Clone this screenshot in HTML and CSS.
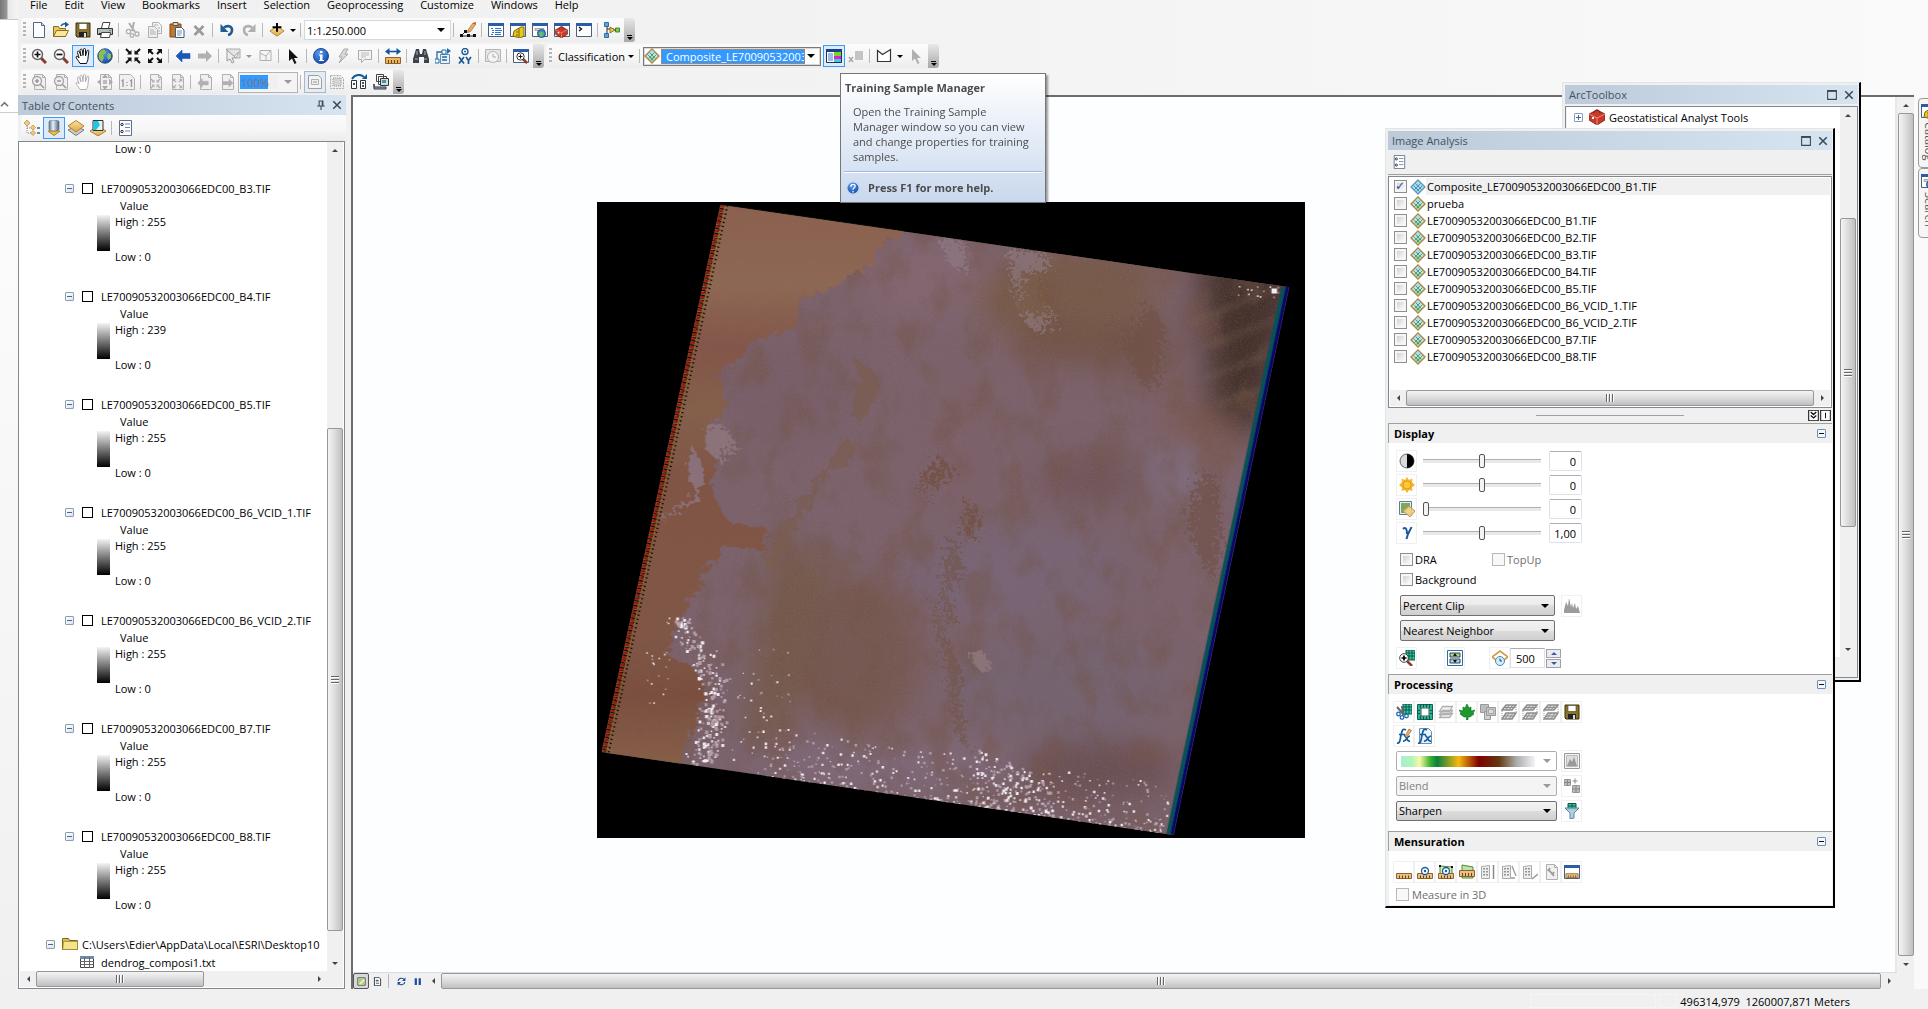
FILE: index.html
```html
<!DOCTYPE html>
<html lang="en">
<head>
<meta charset="utf-8">
<title>ArcMap</title>
<link rel="stylesheet" href="styles.css">
</head>
<body>
<svg class="sprite" aria-hidden="true">
  <defs>
    <linearGradient id="g-gold" x1="0" y1="0" x2="0" y2="1"><stop offset="0" stop-color="#fbe3a0"/><stop offset="1" stop-color="#dca545"/></linearGradient>
    <linearGradient id="g-cyl" x1="0" y1="0" x2="1" y2="0"><stop offset="0" stop-color="#5d718a"/><stop offset=".4" stop-color="#eaf1f8"/><stop offset="1" stop-color="#4f6178"/></linearGradient>
    <radialGradient id="g-blue" cx=".4" cy=".3" r=".8"><stop offset="0" stop-color="#5aa0f0"/><stop offset="1" stop-color="#0b3fa8"/></radialGradient>
  </defs>
  <symbol id="new" viewBox="0 0 16 16"><path d="M2.500 .5h8l3 3v12h-11z" fill="#fbfdff" stroke="#56677c"/><path d="M10.500 .5v3h3" fill="#c8d8e8" stroke="#56677c"/></symbol>
  <symbol id="open" viewBox="0 0 16 16"><path d="M.5 14.500v-10h5l1 2h6v8z" fill="#e8c860" stroke="#8a6d1e"/><path d="M.5 14.500l3-6h12l-3 6z" fill="#f8e69a" stroke="#8a6d1e"/><path d="M8 4c1-2 3-2.500 5-2" fill="none" stroke="#145a9a" stroke-width="1.500"/><path d="M12-.5l4 3-4 3z" fill="#145a9a"/></symbol>
  <symbol id="save" viewBox="0 0 16 16"><path d="M1 1h14v14H2l-1-1z" fill="#8a7328" stroke="#3a3010"/><path d="M4 1.500h8v6H4z" fill="#fff" stroke="#4a4020" stroke-width=".6"/><path d="M4 10h8v5H4z" fill="#222"/><path d="M9 11h2v4H9z" fill="#ddd"/></symbol>
  <symbol id="print" viewBox="0 0 16 16"><path d="M4.500 6L6 .5h7L11.500 6" fill="#fff" stroke="#444"/><path d="M.5 6.500h15v6H.5z" fill="#b8bcc0" stroke="#333"/><path d="M2 11h11v2H2z" fill="#222"/><path d="M4.500 10.500h9l-1 5h-9z" fill="#fff" stroke="#444"/><path d="M12 8h2v1h-2z" fill="#4a4"/></symbol>
  <symbol id="cut" viewBox="0 0 16 16"><path d="M4 1l6 9M9 0l-2 9" fill="none" stroke="currentColor" stroke-width="2"/><circle cx="3.500" cy="9.500" r="2.200" fill="none" stroke="currentColor" stroke-width="1.300"/><circle cx="12" cy="12" r="2" fill="none" stroke="currentColor" stroke-width="1.300"/><circle cx="7" cy="13.500" r="1.800" fill="none" stroke="currentColor" stroke-width="1.300"/></symbol>
  <symbol id="copy" viewBox="0 0 16 16"><path d="M5.500.5h6l3 3v8h-9z" fill="#f2f2f2" stroke="currentColor"/><path d="M1.500 4.500h6l3 3v8h-9z" fill="#eee" stroke="currentColor"/><path d="M3 8h4M3 10h6M3 12h6M7 3h4M11 6h2M11 9h2" stroke="currentColor"/></symbol>
  <symbol id="paste" viewBox="0 0 16 16"><path d="M1 2h11v13H1z" fill="#c07830" stroke="#7c4a14"/><path d="M4 .5h5v3H4z" fill="#e9d9a0" stroke="#555"/><path d="M6.500 5.500h6l2.500 2.500v7.500H6.500z" fill="#fff" stroke="#3a5a80"/><path d="M8 9h5M8 11h5M8 13h4" stroke="#6c90b8"/></symbol>
  <symbol id="del" viewBox="0 0 16 16"><path d="M3.500 4l9 9M12.500 4l-9 9" stroke="#9a9a9a" stroke-width="2.600"/></symbol>
  <symbol id="undo" viewBox="0 0 16 16"><path d="M5 5.500C8 3 13 4 13 8c0 3-2 4.500-4 5" fill="none" stroke="currentColor" stroke-width="2.600"/><path d="M1.500 2v8h8z" fill="currentColor"/></symbol>
  <symbol id="add" viewBox="0 0 18 16"><path d="M1 9l8-5 8 5-8 6z" fill="url(#g-gold)" stroke="#b08030"/><path d="M9 0v10M4 5h10" stroke="#000" stroke-width="2.200"/></symbol>
  <symbol id="sketch" viewBox="0 0 16 16"><path d="M2 13L6 9M1 14h14" fill="none" stroke="#222"/><path d="M0 12h3v3H0zM4 8h3v3H4zM7 12h3v3H7zM13 12h3v3h-3z" fill="#111"/><path d="M8 8l5-7 2.500 1.500-5 7-3 1z" fill="#f0b060" stroke="#8a5020" stroke-width=".6"/><path d="M13 1l2.500 1.500L16 0z" fill="#c33"/></symbol>
  <symbol id="win" viewBox="0 0 16 16"><path d="M.5 1.500h15v13H.5z" fill="#fff" stroke="#4b5f7a"/><path d="M0 1h16v3H0z" fill="#2c5ca8"/></symbol>
  <symbol id="toc" viewBox="0 0 16 16"><use href="#win"/><path d="M3 6.500h2M7 6.500h6M4 8.500h2M7 8.500h7M4 10.500h2M7 10.500h6M3 12.500h2M7 12.500h6" stroke="#2878d8"/></symbol>
  <symbol id="catalog" viewBox="0 0 16 16"><use href="#win"/><path d="M4 9l7-4h3v9l-4 2-7-2z" fill="#e8c81e" stroke="#7a6808"/><path d="M9 6v9M6 10h2M6 13h2" stroke="#7a6808"/></symbol>
  <symbol id="search" viewBox="0 0 16 16"><use href="#win"/><path d="M3 6.500h9v2H3z" fill="#ddd" stroke="#888" stroke-width=".7"/><circle cx="9.500" cy="11.500" r="4" fill="#3a8ad0" stroke="#1c5090"/><path d="M7 11c2-3 3 1 5-1l-1 4-3 1z" fill="#6cc060"/></symbol>
  <symbol id="toolbox" viewBox="0 0 16 16"><path d="M0 5l8-4 8 4v6l-8 5-8-5z" fill="#c83a28" stroke="#701810" stroke-width=".8"/><path d="M0 5l8 4 8-4M8 9v7" fill="none" stroke="#ef8a78"/><path d="M5 4c0-4 6-4 6 0" fill="none" stroke="#701810"/><path d="M3 8h2v2H3z" fill="#fff"/></symbol>
  <symbol id="tbwin" viewBox="0 0 16 16"><use href="#win"/><use href="#toolbox" x="1" y="4" width="13" height="12"/></symbol>
  <symbol id="py" viewBox="0 0 16 16"><use href="#win"/><path d="M3 5l2.500 2L3 9" fill="none" stroke="#111" stroke-width="1.300"/></symbol>
  <symbol id="model" viewBox="0 0 16 16"><path d="M3 3v10M3 7h7M10 8h3" stroke="#333"/><path d="M.5.5h4v4h-4zM.5 11.500h4v4h-4z" fill="#58a8e8" stroke="#14538c" stroke-width=".8"/><path d="M6 5l5 3-5 3z" fill="#f5c843" stroke="#7a5b10" stroke-width=".8"/><path d="M11.500 6h4v4h-4z" fill="#7ccf4e" stroke="#2d6a14" stroke-width=".8"/></symbol>
  <symbol id="zin" viewBox="0 0 16 16"><path d="M10 10l5 5" stroke="#8a3c2c" stroke-width="3"/><circle cx="6.500" cy="6.500" r="5" fill="#fff" stroke="#666" stroke-width="1.500"/><path d="M6.500 3.500v6M3.500 6.500h6" stroke="#111" stroke-width="1.700"/></symbol>
  <symbol id="zout" viewBox="0 0 16 16"><path d="M10 10l5 5" stroke="#8a3c2c" stroke-width="3"/><circle cx="6.500" cy="6.500" r="5" fill="#fff" stroke="#666" stroke-width="1.500"/><path d="M3.500 6.500h6" stroke="#111" stroke-width="1.700"/></symbol>
  <symbol id="pan" viewBox="0 0 16 16"><path d="M5 15.500C3 12 1 10 1 9s2-1 3 1L2.500 4.500C2 3 4 2.500 4.500 4L6 8 5 2.500C5 1 7 .5 7.200 2L8 7.500 8.500 1.500c0-1.500 2-1.500 2 0L10.500 8l1.500-5c.5-1.500 2-1 1.800.5L13 10c0 3-1 3.500-1.500 5.500z" fill="#fff" stroke="currentColor"/></symbol>
  <symbol id="globe" viewBox="0 0 16 16"><circle cx="8" cy="8" r="7.300" fill="url(#g-blue)" stroke="#24466e" stroke-width=".8"/><path d="M2 5c2-4 5-4 6-3l1 3-3 2 1 3-2 4C2 12 1 9 2 5zM11 5l3 1v4l-3 2-1-4z" fill="#8cc04c"/></symbol>
  <symbol id="fzin" viewBox="0 0 16 16"><path d="M1 1l4 4M15 1l-4 4M1 15l4-4M15 15l-4-4" stroke="currentColor" stroke-width="2"/><path d="M6.500 2v4.500H2zM9.500 2v4.500H14zM6.500 14V9.500H2zM9.500 14V9.500H14z" fill="currentColor"/></symbol>
  <symbol id="fzout" viewBox="0 0 16 16"><path d="M2 2l4 4M14 2l-4 4M2 14l4-4M14 14l-4-4" stroke="currentColor" stroke-width="2"/><path d="M1 1h5L1 6zM15 1h-5l5 5zM1 15h5l-5-5zM15 15h-5l5-5z" fill="currentColor"/></symbol>
  <symbol id="back" viewBox="0 0 16 16"><path d="M1 8l6-6v3.500h8v5H7V14z" fill="currentColor" stroke="currentColor" stroke-width=".6"/></symbol>
  <symbol id="fwd" viewBox="0 0 16 16"><path d="M15 8L9 2v3.500H1v5h8V14z" fill="currentColor"/></symbol>
  <symbol id="selfeat" viewBox="0 0 16 16"><path d="M1 1h14v9h-4l3-6-6 5z" fill="#e4e4e4" stroke="#aaa"/><path d="M2 2l0 11 3-2 2 4 2-1-2-4h4z" fill="#eee" stroke="#999"/></symbol>
  <symbol id="clearsel" viewBox="0 0 16 16"><path d="M3 2.500h11v10H3zM3 5l6 3 4-5M9 8v4" fill="#f4f4f4" stroke="#b0b0b0"/></symbol>
  <symbol id="pointer" viewBox="0 0 16 16"><path d="M4 1v12l3-2.500L9.500 16l2-1L9 10h4z" fill="currentColor"/></symbol>
  <symbol id="info" viewBox="0 0 16 16"><circle cx="8" cy="8" r="7.500" fill="url(#g-blue)" stroke="#1b4a94"/><path d="M7 3h2.500v2H7zM6 6.500h3.500V12H11v1H6v-1h1V7.500H6z" fill="#fff"/></symbol>
  <symbol id="flash" viewBox="0 0 16 16"><path d="M9 1h4l-3 5h3L4 15l3-6H4z" fill="#d8d8d8" stroke="#aaa"/></symbol>
  <symbol id="note" viewBox="0 0 16 16"><path d="M1.500 2.500h13v9h-7l-3 3v-3h-3z" fill="#f4f4f4" stroke="#aaa"/><path d="M4 5h8M4 7h8M4 9h5" stroke="#bbb"/></symbol>
  <symbol id="measure" viewBox="0 0 16 16"><path d="M3 3.500h10" stroke="#14559c" stroke-width="1.600"/><path d="M4.500 0v7L0 3.500zM11.500 0v7L16 3.500z" fill="#14559c"/><path d="M.5 9.500h15v6H.5z" fill="#e8b868" stroke="#94602a"/><path d="M3.500 12v3M6.500 12v3M9.500 12v3M12.500 12v3" stroke="#70420e"/></symbol>
  <symbol id="find" viewBox="0 0 16 16"><path d="M3 1h3l1 5h2l1-5h3l3 10v4h-5V9H6v6H0v-4z" fill="#3c4248"/><path d="M2 11h3M11 11h3M4 3v4M12 3v4" stroke="#aab4bd"/></symbol>
  <symbol id="route" viewBox="0 0 16 16"><path d="M5.500 6.500h9v9h-9z" fill="#e8f0f8" stroke="#6b87a4"/><path d="M2 13V4h9M7 9h5M7 12h5" fill="none" stroke="#1d6cae" stroke-width="1.300"/><path d="M0 11h4v4H0zM7 2h4v4H7z" fill="#fff" stroke="#1d6cae"/><path d="M12 0l4 3-4 3z" fill="#1d6cae"/></symbol>
  <symbol id="xy" viewBox="0 0 16 16"><circle cx="8" cy="3.500" r="3" fill="#fff" stroke="#1d5a94" stroke-width="1.400"/><circle cx="8" cy="3.500" r="1" fill="#1d5a94"/><path d="M2 9l5 6.500M7 9l-5 6.500M9 9l2.500 3.500L14 9M11.500 12v4" fill="none" stroke="#1d5a94" stroke-width="1.700"/></symbol>
  <symbol id="time" viewBox="0 0 16 16"><path d="M.5 1.500h15v12H.5z" fill="#e6e6e6" stroke="#b4b4b4"/><circle cx="8" cy="9" r="5.500" fill="#f4f4f4" stroke="#b4b4b4"/><path d="M8 6v3h3" fill="none" stroke="#aaa"/></symbol>
  <symbol id="magwin" viewBox="0 0 16 16"><use href="#win"/><path d="M10 11l4 4" stroke="#8a3c2c" stroke-width="2.500"/><circle cx="7.500" cy="8.500" r="3.700" fill="#fff" stroke="#333"/><path d="M7.500 6.500v4M5.500 8.500h4" stroke="#111"/></symbol>
  <symbol id="pg" viewBox="0 0 16 16"><path d="M3.500 .5h8l3 3v12h-11z" fill="#f0f0f0" stroke="#b0b0b0"/><path d="M11.500.5v3h3" fill="none" stroke="#b0b0b0"/></symbol>
  <symbol id="pgzin" viewBox="0 0 16 16"><use href="#pg"/><circle cx="6" cy="7" r="4.500" fill="#eee" stroke="#a4a4a4" stroke-width="1.300"/><path d="M6 5v4M4 7h4M9 10l4 4" stroke="#999" stroke-width="1.500"/></symbol>
  <symbol id="pgzout" viewBox="0 0 16 16"><use href="#pg"/><circle cx="6" cy="7" r="4.500" fill="#eee" stroke="#a4a4a4" stroke-width="1.300"/><path d="M4 7h4M9 10l4 4" stroke="#999" stroke-width="1.500"/></symbol>
  <symbol id="pgfull" viewBox="0 0 16 16"><use href="#pg"/><path d="M8 0l3 4H5zM8 16l3-4H5zM0 8l4-3v6zM16 8l-4-3v6z" fill="#aaa"/><path d="M6 6h4v4H6z" fill="#bbb"/></symbol>
  <symbol id="pg11" viewBox="0 0 16 16"><path d="M.5.5h11l4 4v11H.5z" fill="#f0f0f0" stroke="#b0b0b0"/><path d="M2.500 7L4 6v7M8 8v1M8 11v1M11 7l1.500-1v7" fill="none" stroke="#999" stroke-width="1.400"/></symbol>
  <symbol id="pgin" viewBox="0 0 16 16"><use href="#pg"/><use href="#fzin" x="3" y="4" width="11" height="11"/></symbol>
  <symbol id="pgout" viewBox="0 0 16 16"><use href="#pg"/><use href="#fzout" x="3" y="4" width="11" height="11"/></symbol>
  <symbol id="pgback" viewBox="0 0 16 16"><use href="#pg"/><use href="#back" x="0" y="3" width="12" height="12"/></symbol>
  <symbol id="pgfwd" viewBox="0 0 16 16"><use href="#pg"/><use href="#fwd" x="3" y="3" width="12" height="12"/></symbol>
  <symbol id="draft" viewBox="0 0 16 16"><path d="M1.500 1.500h10l3 3v10h-13z" fill="#f4f4f4" stroke="#a0a0a0"/><path d="M4.500 5.500h7v5h-7z" fill="#eee" stroke="#b0b0b0"/><path d="M6 8h4" stroke="#999"/></symbol>
  <symbol id="focus" viewBox="0 0 16 16"><path d="M1.500 1.500h10l3 3v10h-13z" fill="#eee" stroke="#aaa" stroke-dasharray="2 1"/><path d="M4 4h8v8H4z" fill="#d4d4d4" stroke="#999" stroke-dasharray="1 1"/></symbol>
  <symbol id="chlay" viewBox="0 0 16 16"><path d="M1 5c3-5 9-5 12-2" fill="none" stroke="#145a9a" stroke-width="2"/><path d="M11 5h5V0z" fill="#145a9a"/><path d="M.5 6.500h5v8h-5zM9.500 6.500h5v8h-5z" fill="#fff" stroke="#333"/><path d="M2 9h2v2H2zM11 8h2v2h-2zM11 11h2v2h-2z" fill="#357"/></symbol>
  <symbol id="ddp" viewBox="0 0 16 16"><path d="M3.500.5h7v7h-7zM5.500 2.500h8v8h-8z" fill="#fff" stroke="#444"/><path d="M7.500 4.500h8v7h-8z" fill="#cfe4c8" stroke="#333"/><path d="M9 6h4v3H9z" fill="#4c8cc0"/><path d="M1 10v3h12v2H1z" fill="#9ab0c0" stroke="#334"/></symbol>
  <symbol id="ras" viewBox="0 0 16 16"><path d="M8 1l7 7-7 7-7-7z" fill="#bfe8dc" stroke="#b08a4c" stroke-width="1.500"/><path d="M8 2l3 3-3 3-3-3z" fill="#a8e0ee"/><path d="M8 8l3 3-3 3-3-3z" fill="#9ed890"/><path d="M5.500 4.500l6 6M3.500 6.500l6 6M10.500 4.500l-6 6M12.500 6.500l-6 6" stroke="#4f8f80" stroke-width=".9"/></symbol>
  <symbol id="rasb" viewBox="0 0 16 16"><path d="M8 1l7 7-7 7-7-7z" fill="#a8dcec" stroke="#5c98b8" stroke-width="1.300"/><path d="M5.500 4.500l6 6M3.500 6.500l6 6M10.500 4.500l-6 6M12.500 6.500l-6 6" stroke="#4084a4" stroke-width=".9"/></symbol>
  <symbol id="tsm" viewBox="0 0 16 16"><path d="M.5 1.500h15v13H.5z" fill="#fff" stroke="#234"/><path d="M0 1h16v3H0z" fill="#1c3f8c"/><path d="M2 6h5M2 8h5M2 10h5M2 12h5" stroke="#3c78d8"/><path d="M8 4h7v4H8z" fill="#7ed321"/><path d="M8 8h7v3H8z" fill="#e020d8"/><path d="M8 11h7v3H8z" fill="#3cc8e8"/></symbol>
  <symbol id="clrsig" viewBox="0 0 16 16"><path d="M7 3h8v9H7z" fill="#c4c4c4"/><path d="M1 9l4 5M5 9l-4 5" stroke="#aaa" stroke-width="1.500"/></symbol>
  <symbol id="poly" viewBox="0 0 16 16"><path d="M1.500 2.500l5 4 8-5v12h-13z" fill="#fff" stroke="#333" stroke-width="1.200"/></symbol>
  <symbol id="tree" viewBox="0 0 16 16"><path d="M3 4v9h5M3 8h5" fill="none" stroke="#889" stroke-dasharray="1 1"/><path d="M3 0l3 3-3 3-3-3zM9 5l2.500 2.500L9 10 6.500 7.500zM9 10.500l2.500 2.500L9 15.500 6.500 13z" fill="#f3c97c" stroke="#b8863a" stroke-width=".7"/><path d="M13 8h3M13 13h3" stroke="#2a6ca0" stroke-width="1.500"/></symbol>
  <symbol id="src" viewBox="0 0 16 16"><path d="M2 11h12l-6 4.500z" fill="#f3c050" stroke="#b07a1c"/><path d="M3 1.500c2-2 8-2 10 0v8c-2 2-8 2-10 0z" fill="url(#g-cyl)" stroke="#56677c" stroke-width=".6"/></symbol>
  <symbol id="vis" viewBox="0 0 16 16"><path d="M0 10l8 5.500L16 10l-8-4z" fill="#ccc" stroke="#777"/><path d="M0 6l8-5.500L16 6l-8 6z" fill="url(#g-gold)" stroke="#b08030"/></symbol>
  <symbol id="selv" viewBox="0 0 16 16"><path d="M0 11l5-3h6l5 3-8 5z" fill="url(#g-gold)" stroke="#b08030"/><path d="M3 .5h10v10H3z" fill="#eee" stroke="#333"/><path d="M3.500 1H8l2 4-4 5H3.500z" fill="#1cc8e8"/></symbol>
  <symbol id="opts" viewBox="0 0 16 16"><path d="M2.500.5h12v15h-12z" fill="#fff" stroke="#5c6f92"/><circle cx="5" cy="4.500" r="1.200" fill="none" stroke="#222"/><circle cx="5" cy="11.500" r="1.200" fill="none" stroke="#222"/><path d="M8 4h5M8 7.500h5M8 11h5" stroke="#6c84b0"/></symbol>
  <symbol id="folder" viewBox="0 0 16 16"><path d="M.5 13.500v-11h6l1 2h8v9z" fill="#d9bc4c" stroke="#806a1c"/><path d="M1.500 5.500h14v8H.8z" fill="#f4e48c" stroke="#9a822c" stroke-width=".7"/></symbol>
  <symbol id="tbl" viewBox="0 0 16 16"><path d="M1.500 2.500h13v11h-13z" fill="#fff" stroke="#444"/><path d="M1 2h14v3H1z" fill="#6f8ba8"/><path d="M1 7.500h14M1 10.500h14M5.500 3v11M10.500 3v11" stroke="#666"/></symbol>
  <symbol id="pin" viewBox="0 0 16 16"><path d="M5 9V1.500h6V9M2 9.500h12M8 10v6M10 2v7" fill="none" stroke="#3c4650" stroke-width="1.700"/></symbol>
  <symbol id="x" viewBox="0 0 16 16"><path d="M2 2l12 12M14 2L2 14" stroke="#3c4650" stroke-width="2.400"/></symbol>
  <symbol id="max" viewBox="0 0 16 16"><path d="M1 1h14v14H1z" fill="none" stroke="#3c4650" stroke-width="1.700"/><path d="M1 2h14" stroke="#3c4650" stroke-width="2"/></symbol>
  <symbol id="contrast" viewBox="0 0 16 16"><circle cx="8" cy="8" r="7" fill="#d8dadc" stroke="#666"/><path d="M8 1a7 7 0 010 14z" fill="#000"/></symbol>
  <symbol id="sun" viewBox="0 0 16 16"><path d="M8 0l2 3 3.500-1.500L13 5l3 3-3 2.500.5 3.500-3.500-1L8 16l-2-3-3.500 1L3 10.500 0 8l3-3-.5-3.500L6 3z" fill="#f6b52c"/><circle cx="8" cy="8" r="4" fill="#ffc93e" stroke="#e09a1c"/></symbol>
  <symbol id="transp" viewBox="0 0 16 16"><path d="M.5.5h12v13H.5z" fill="#e8eef4" stroke="#5c7c9c"/><path d="M2 2h9v5l-5 5H2z" fill="#7ea860"/><path d="M4 10l6-5 6 5-5 6z" fill="#f0cd84" stroke="#c09448" fill-opacity=".9"/></symbol>
  <symbol id="gamma" viewBox="0 0 16 16"><path d="M4 4c3-3 4 1 4 5M12.500 2c-1 3-4 6-5 12" fill="none" stroke="#1c5a9c" stroke-width="2"/></symbol>
  <symbol id="hist" viewBox="0 0 16 16"><path d="M0 15V12l2-8 2 4 1-8 2 9 1-4 1 5 2-5 1 6 2-3 2 7v0z" fill="#9c9c9c"/></symbol>
  <symbol id="zras" viewBox="0 0 16 16"><path d="M7 0h9v10H7z" fill="#2ccf9c" stroke="#145048"/><path d="M10 0v10M13 0v10M7 3h9M7 6h9" stroke="#145048"/><path d="M8 11l5 5" stroke="#8a3c2c" stroke-width="2.500"/><circle cx="5" cy="8" r="4.300" fill="#fff" stroke="#444"/><path d="M5 5.500v5M2.500 8h5" stroke="#000" stroke-width="1.700"/></symbol>
  <symbol id="swipe" viewBox="0 0 16 16"><path d="M.5.5h15v15H.5z" fill="#fff" stroke="#2c6ca8"/><path d="M3 3h10v4H3z" fill="#a8d488" stroke="#345"/><path d="M3 9h10v4H3z" fill="#9cd4ec" stroke="#345"/><path d="M8 3l2 3H6zM8 13l2-3H6z" fill="#111"/></symbol>
  <symbol id="flick" viewBox="0 0 16 16"><path d="M0 7l8-6 8 6-8 6z" fill="#fff" stroke="#d09c3c" stroke-width="1.600"/><circle cx="8" cy="11" r="4.500" fill="#d4ecfa" stroke="#4c88b8"/><path d="M8 8.500V11h2" fill="none" stroke="#246"/></symbol>
  <symbol id="clip" viewBox="0 0 16 16"><path d="M7 0h9v10H7z" fill="#2ccf9c" stroke="#145048"/><path d="M10 0v10M13 0v10M7 3h9M7 6h9" stroke="#145048"/><path d="M1 3l7 8M6 2l1 9" stroke="#666" stroke-width="2"/><circle cx="2.500" cy="10" r="1.800" fill="none" stroke="#1c6cb4" stroke-width="1.300"/><circle cx="6" cy="13.500" r="1.800" fill="none" stroke="#1c6cb4" stroke-width="1.300"/><circle cx="10.500" cy="12" r="1.800" fill="none" stroke="#1c6cb4" stroke-width="1.300"/></symbol>
  <symbol id="mask" viewBox="0 0 16 16"><path d="M2 2h12v12H2z" fill="#fff" stroke="#20b890" stroke-width="3"/><path d="M.5.5h15v15H.5zM3.500.5v4M6.500.5v3M9.500.5v3M12.500.5v4M3.500 15.500v-4M6.500 15.500v-3M9.500 15.500v-3M12.500 15.500v-4M.5 6.500h3M.5 9.500h3M15.500 6.500h-3M15.500 9.500h-3M4 4h8v8H4z" fill="none" stroke="#0c4c44" stroke-width=".9"/></symbol>
  <symbol id="stack" viewBox="0 0 16 16"><path d="M4.500 9.500h10l-3 4h-10zM4.500 6.500h10l-3 4h-10zM4.500 2.500h10l-3 5h-10z" fill="#f0f0f0" stroke="#b0b0b0" stroke-width="1.300"/></symbol>
  <symbol id="leaf" viewBox="0 0 16 16"><path d="M8 0l2 4 2-1v4l4-1-2 3 1 1-4 3H9v3H7.500v-3H5L1 10l1-1-2-3 4 1V3l2 1z" fill="#1e9a2c" stroke="#0c6c1a" stroke-width=".6"/></symbol>
  <symbol id="mosaic" viewBox="0 0 16 16"><path d="M.5.5h8v8h-8z" fill="#bcbcbc" stroke="#999"/><path d="M4.500 7.500h6v8h-6z" fill="#d0d0d0" stroke="#999"/><path d="M6.500 3.500h9v8h-9z" fill="#c4c4c4" stroke="#999"/><path d="M8.500 5.500h5v4h-5z" fill="#ddd" stroke="#aaa"/></symbol>
  <symbol id="ortho" viewBox="0 0 16 16"><path d="M5 1h10l-4 5H1zM5 9h10l-4 6H1z" fill="#ddd" stroke="#8c8c8c" stroke-width="1.500"/><path d="M8 1L5 6M12 1L8 6M3 3.500h10M8 9l-4 6M12 9l-4 6M3 12h10" stroke="#8c8c8c"/><path d="M1 7v7M15 3v6" stroke="#999" stroke-dasharray="1 1"/></symbol>
  <symbol id="fx" viewBox="0 0 16 16"><path d="M1 15c3 1 3-3 4-8s2-7 5-5M3 6.500h6M8 8c3-1 2 6 6 5M14 8c-3 0-4 6-7 5" fill="none" stroke="#145a9c" stroke-width="1.700"/></symbol>
  <symbol id="fxe" viewBox="0 0 16 16"><use href="#fx"/><path d="M9 8l4-7 2.500 1.500-5 7z" fill="#f0b060" stroke="#8a5020" stroke-width=".6"/></symbol>
  <symbol id="fxp" viewBox="0 0 16 16"><path d="M2.500.5h9l3 3v12h-12z" fill="#e8f2fb" stroke="#6890b4"/><use href="#fx"/></symbol>
  <symbol id="shade" viewBox="0 0 16 16"><path d="M.5.500h15v15H.5z" fill="#f4f4f4" stroke="#999"/><path d="M2.500 2.500h11v11h-11z" fill="#ddd" stroke="#bbb"/><path d="M3 13l3-7 2 3 2-5 3 9z" fill="#999"/></symbol>
  <symbol id="pansh" viewBox="0 0 16 16"><path d="M.5 1.500h6v6h-6zM8.500 7.500h7v7h-7z" fill="#bbb" stroke="#999"/><path d="M3.500 1v7M0 4.500h7M12 7v8M8 11h8M11 .5v5M8.500 3h5" stroke="#888"/></symbol>
  <symbol id="filter" viewBox="0 0 16 16"><path d="M4 .5h8V6H4z" fill="#2ccf9c" stroke="#145048"/><path d="M8 0v6M4 3h8" stroke="#145048"/><path d="M1 5h14l-5 5v5l-4 1v-6z" fill="#a9cbe0" stroke="#5c84a0" fill-opacity=".9"/></symbol>
  <symbol id="rul" viewBox="0 0 16 16"><path d="M.5 9.500h15v5H.5z" fill="#e8c088" stroke="#94602a"/><path d="M3.500 11.500v3M6.500 11.500v3M9.500 11.500v3M12.500 11.500v3" stroke="#70420e"/></symbol>
  <symbol id="rulp" viewBox="0 0 16 16"><use href="#rul"/><circle cx="8" cy="7" r="3.500" fill="#fff" stroke="#1c5c9c" stroke-width="1.300"/><circle cx="8" cy="7" r="1.200" fill="#1c5c9c"/></symbol>
  <symbol id="rulc" viewBox="0 0 16 16"><path d="M2 2l12 1v11H2z" fill="#d8ecc8" stroke="#4c8a34"/><use href="#rulp"/><path d="M1 1h2v2H1zM13 2h2v2h-2z" fill="#111"/></symbol>
  <symbol id="rula" viewBox="0 0 16 16"><path d="M3 1l11 2v11H3z" fill="#bfe0a8" stroke="#4c8a34"/><path d="M.5 6.500h15v6H.5z" fill="#e8c088" stroke="#94602a"/><path d="M3.500 9v3M6.500 9v3M9.500 9v3M12.500 9v3" stroke="#70420e"/></symbol>
  <symbol id="bld" viewBox="0 0 16 16"><path d="M1.500 2.500l8-1v13h-8z" fill="#eee" stroke="#aaa"/><path d="M4 4v9M7 4v9" stroke="#777" stroke-width="1.500" stroke-dasharray="1.500 1.500"/></symbol>
  <symbol id="bld1" viewBox="0 0 16 16"><use href="#bld"/><path d="M13.500 1v14" stroke="#888" stroke-width="1.500"/></symbol>
  <symbol id="bld2" viewBox="0 0 16 16"><use href="#bld"/><path d="M11 2l4 10M10 14h4" stroke="#999" stroke-width="1.300"/></symbol>
  <symbol id="bld3" viewBox="0 0 16 16"><use href="#bld"/><path d="M10 15l6-5" stroke="#999" stroke-width="1.500"/></symbol>
  <symbol id="meas3" viewBox="0 0 16 16"><use href="#pg"/><path d="M5 5l6 7M7 4l-2 3M11 8l-2 3" stroke="#999" stroke-width="1.800"/></symbol>
  <symbol id="rulw" viewBox="0 0 16 16"><use href="#win"/><use href="#rul" x="1" y="2" width="14" height="13"/></symbol>
  <symbol id="chk" viewBox="0 0 16 16"><path d="M1 .5h14v15H1z" fill="#fff" stroke="#111" stroke-width="1.500"/><path d="M4 3l4 3.500L12 3M4 8l4 3.500L12 8" fill="none" stroke="#111" stroke-width="2"/></symbol>
  <symbol id="bar" viewBox="0 0 16 16"><path d="M1 .5h14v15H1z" fill="#fff" stroke="#111" stroke-width="1.500"/><path d="M8 4v8" stroke="#111" stroke-width="1.500"/></symbol>
  <symbol id="help" viewBox="0 0 16 16"><circle cx="8" cy="8" r="7" fill="url(#g-blue)" stroke="#c8d4e8" stroke-width="1.500"/><path d="M5.500 6.500c0-3.500 5-3.500 5-.5 0 2-2.500 1.500-2.500 4M8 11.500v1.500" fill="none" stroke="#fff" stroke-width="1.500"/></symbol>
  <symbol id="dview" viewBox="0 0 16 16"><path d="M1.500 1.500h13v13h-13z" fill="#fff" stroke="#333" stroke-width="1.500"/><path d="M3 3h10v10H3z" fill="#a5cc6a"/><path d="M3 13l5-7 5-3v4l-5 6z" fill="#e4efb8"/></symbol>
  <symbol id="lview" viewBox="0 0 16 16"><path d="M2.500.5h8l3 3v12h-11z" fill="#fff" stroke="#222" stroke-width="1.500"/><path d="M5 5h5v3H5zM5 10h6v2H5z" fill="#3c6c8c"/></symbol>
  <symbol id="refr" viewBox="0 0 16 16"><path d="M2 7c1-6 9-6 11-2M14 9c-1 6-9 6-11 2" fill="none" stroke="#1c4c94" stroke-width="2"/><path d="M15 1v6H9zM1 15V9h6z" fill="#1c4c94"/></symbol>
  <symbol id="pause" viewBox="0 0 16 16"><path d="M3 2h4v12H3zM10 2h4v12h-4z" fill="#1c4ca4"/></symbol>
</svg>

<div class="page">
  <aside class="behind" aria-hidden="true">
    <div class="behind-photo"></div>
    <div class="behind-nav"><svg viewBox="0 0 10 8"><path d="M1 6l4-4 4 4" fill="none" stroke="#777" stroke-width="2"/></svg></div>
    <div class="behind-rest"></div>
  </aside>

  <div class="app">
    <header class="top">
      <nav class="menu">
        <a href="#">File</a><a href="#">Edit</a><a href="#">View</a><a href="#">Bookmarks</a><a href="#">Insert</a><a href="#">Selection</a><a href="#">Geoprocessing</a><a href="#">Customize</a><a href="#">Windows</a><a href="#">Help</a>
      </nav>
      <div class="row">
        <div class="bar">
          <i class="grip"></i>
          <button class="tb" aria-label="New"><svg><use href="#new"/></svg></button>
          <button class="tb" aria-label="Open"><svg><use href="#open"/></svg></button>
          <button class="tb" aria-label="Save"><svg><use href="#save"/></svg></button>
          <button class="tb" aria-label="Print"><svg><use href="#print"/></svg></button>
          <i class="sep"></i>
          <button class="tb off" aria-label="Cut"><svg><use href="#cut"/></svg></button>
          <button class="tb off" aria-label="Copy"><svg><use href="#copy"/></svg></button>
          <button class="tb" aria-label="Paste"><svg><use href="#paste"/></svg></button>
          <button class="tb off" aria-label="Delete"><svg><use href="#del"/></svg></button>
          <i class="sep"></i>
          <button class="tb navy" aria-label="Undo"><svg><use href="#undo"/></svg></button>
          <button class="tb off flip" aria-label="Redo"><svg><use href="#undo"/></svg></button>
          <i class="sep"></i>
          <button class="tb" aria-label="Add Data"><svg><use href="#add"/></svg></button>
          <button class="drop thin" aria-label="Add Data options"></button>
          <i class="sep"></i>
          <span class="pick scale"><select aria-label="Map scale"><option>1:1.250.000</option></select></span>
          <i class="sep"></i>
          <button class="tb" aria-label="Editor Toolbar"><svg><use href="#sketch"/></svg></button>
          <i class="sep"></i>
          <button class="tb" aria-label="Table Of Contents"><svg><use href="#toc"/></svg></button>
          <button class="tb" aria-label="Catalog"><svg><use href="#catalog"/></svg></button>
          <button class="tb" aria-label="Search"><svg><use href="#search"/></svg></button>
          <button class="tb" aria-label="ArcToolbox"><svg><use href="#tbwin"/></svg></button>
          <button class="tb" aria-label="Python"><svg><use href="#py"/></svg></button>
          <i class="sep"></i>
          <button class="tb" aria-label="ModelBuilder"><svg><use href="#model"/></svg></button>
          <button class="more" aria-label="Toolbar options"></button>
        </div>
      </div>
      <div class="row">
        <div class="bar">
          <i class="grip"></i>
          <button class="tb" aria-label="Zoom In"><svg><use href="#zin"/></svg></button>
          <button class="tb" aria-label="Zoom Out"><svg><use href="#zout"/></svg></button>
          <button class="tb on" aria-label="Pan"><svg><use href="#pan"/></svg></button>
          <button class="tb" aria-label="Full Extent"><svg><use href="#globe"/></svg></button>
          <i class="sep"></i>
          <button class="tb" aria-label="Fixed Zoom In"><svg><use href="#fzin"/></svg></button>
          <button class="tb" aria-label="Fixed Zoom Out"><svg><use href="#fzout"/></svg></button>
          <i class="sep"></i>
          <button class="tb blue" aria-label="Previous Extent"><svg><use href="#back"/></svg></button>
          <button class="tb off" aria-label="Next Extent"><svg><use href="#fwd"/></svg></button>
          <i class="sep"></i>
          <button class="tb off" aria-label="Select Features"><svg><use href="#selfeat"/></svg></button>
          <button class="drop thin off" aria-label="Select options"></button>
          <button class="tb off" aria-label="Clear Selection"><svg><use href="#clearsel"/></svg></button>
          <i class="sep"></i>
          <button class="tb" aria-label="Select Elements"><svg><use href="#pointer"/></svg></button>
          <i class="sep"></i>
          <button class="tb" aria-label="Identify"><svg><use href="#info"/></svg></button>
          <button class="tb off" aria-label="Hyperlink"><svg><use href="#flash"/></svg></button>
          <button class="tb off" aria-label="HTML Popup"><svg><use href="#note"/></svg></button>
          <i class="sep"></i>
          <button class="tb" aria-label="Measure"><svg><use href="#measure"/></svg></button>
          <i class="sep"></i>
          <button class="tb" aria-label="Find"><svg><use href="#find"/></svg></button>
          <button class="tb" aria-label="Find Route"><svg><use href="#route"/></svg></button>
          <button class="tb" aria-label="Go To XY"><svg><use href="#xy"/></svg></button>
          <i class="sep"></i>
          <button class="tb off" aria-label="Time Slider"><svg><use href="#time"/></svg></button>
          <i class="sep"></i>
          <button class="tb" aria-label="Viewer Window"><svg><use href="#magwin"/></svg></button>
          <button class="more" aria-label="Toolbar options"></button>
        </div>
        <div class="bar">
          <i class="grip"></i>
          <button class="label-btn">Classification</button><button class="drop" aria-label="Classification menu"></button>
          <i class="sep"></i>
          <span class="pick layer"><svg><use href="#ras"/></svg><select aria-label="Classification layer"><option>Composite_LE70090532003066EDC00_B1.TIF</option></select></span>
          <button class="tb on" aria-label="Training Sample Manager"><svg><use href="#tsm"/></svg></button>
          <button class="tb off" aria-label="Clear Training Samples"><svg><use href="#clrsig"/></svg></button>
          <i class="sep"></i>
          <button class="tb" aria-label="Draw Polygon"><svg><use href="#poly"/></svg></button>
          <button class="drop thin" aria-label="Draw options"></button>
          <button class="tb off" aria-label="Select Training Sample"><svg><use href="#pointer"/></svg></button>
          <button class="more" aria-label="Toolbar options"></button>
        </div>
      </div>
      <div class="row">
        <div class="bar">
          <i class="grip"></i>
          <button class="tb off" aria-label="Page Zoom In"><svg><use href="#pgzin"/></svg></button>
          <button class="tb off" aria-label="Page Zoom Out"><svg><use href="#pgzout"/></svg></button>
          <button class="tb off" aria-label="Page Pan"><svg><use href="#pan"/></svg></button>
          <button class="tb off" aria-label="Zoom Whole Page"><svg><use href="#pgfull"/></svg></button>
          <button class="tb off" aria-label="Zoom to 100%"><svg><use href="#pg11"/></svg></button>
          <i class="sep"></i>
          <button class="tb off" aria-label="Page Fixed Zoom In"><svg><use href="#pgin"/></svg></button>
          <button class="tb off" aria-label="Page Fixed Zoom Out"><svg><use href="#pgout"/></svg></button>
          <i class="sep"></i>
          <button class="tb off" aria-label="Page Back"><svg><use href="#pgback"/></svg></button>
          <button class="tb off" aria-label="Page Forward"><svg><use href="#pgfwd"/></svg></button>
          <span class="pick zoom"><select aria-label="Page zoom" disabled><option>100%</option></select></span>
          <i class="sep"></i>
          <button class="tb off on dim" aria-label="Toggle Draft Mode"><svg><use href="#draft"/></svg></button>
          <button class="tb off" aria-label="Focus Data Frame"><svg><use href="#focus"/></svg></button>
          <button class="tb" aria-label="Change Layout"><svg><use href="#chlay"/></svg></button>
          <button class="tb" aria-label="Data Driven Pages"><svg><use href="#ddp"/></svg></button>
          <button class="more" aria-label="Toolbar options"></button>
        </div>
      </div>
    </header>

    <main class="work">
      <section class="toc">
        <div class="title"><h2>Table Of Contents</h2><button aria-label="Auto Hide"><svg><use href="#pin"/></svg></button><button aria-label="Close"><svg><use href="#x"/></svg></button></div>
        <div class="bar toc-tools">
          <button class="tb" aria-label="List By Drawing Order"><svg><use href="#tree"/></svg></button>
          <button class="tb on" aria-label="List By Source"><svg><use href="#src"/></svg></button>
          <button class="tb" aria-label="List By Visibility"><svg><use href="#vis"/></svg></button>
          <button class="tb" aria-label="List By Selection"><svg><use href="#selv"/></svg></button>
          <i class="sep"></i>
          <button class="tb" aria-label="Options"><svg><use href="#opts"/></svg></button>
        </div>
        <div class="toc-box">
          <div class="toc-list">
            <div class="lay tail"><div class="leg"><div class="hl"><span>Low : 0</span></div></div></div>
            <div class="lay"><div class="name"><button class="tw" aria-label="Collapse"></button><input type="checkbox" id="l3"><label for="l3">LE70090532003066EDC00_B3.TIF</label></div><div class="val">Value</div><div class="leg"><i class="ramp"></i><div class="hl"><span>High : 255</span><span>Low : 0</span></div></div></div>
            <div class="lay"><div class="name"><button class="tw" aria-label="Collapse"></button><input type="checkbox" id="l4"><label for="l4">LE70090532003066EDC00_B4.TIF</label></div><div class="val">Value</div><div class="leg"><i class="ramp"></i><div class="hl"><span>High : 239</span><span>Low : 0</span></div></div></div>
            <div class="lay"><div class="name"><button class="tw" aria-label="Collapse"></button><input type="checkbox" id="l5"><label for="l5">LE70090532003066EDC00_B5.TIF</label></div><div class="val">Value</div><div class="leg"><i class="ramp"></i><div class="hl"><span>High : 255</span><span>Low : 0</span></div></div></div>
            <div class="lay"><div class="name"><button class="tw" aria-label="Collapse"></button><input type="checkbox" id="l61"><label for="l61">LE70090532003066EDC00_B6_VCID_1.TIF</label></div><div class="val">Value</div><div class="leg"><i class="ramp"></i><div class="hl"><span>High : 255</span><span>Low : 0</span></div></div></div>
            <div class="lay"><div class="name"><button class="tw" aria-label="Collapse"></button><input type="checkbox" id="l62"><label for="l62">LE70090532003066EDC00_B6_VCID_2.TIF</label></div><div class="val">Value</div><div class="leg"><i class="ramp"></i><div class="hl"><span>High : 255</span><span>Low : 0</span></div></div></div>
            <div class="lay"><div class="name"><button class="tw" aria-label="Collapse"></button><input type="checkbox" id="l7"><label for="l7">LE70090532003066EDC00_B7.TIF</label></div><div class="val">Value</div><div class="leg"><i class="ramp"></i><div class="hl"><span>High : 255</span><span>Low : 0</span></div></div></div>
            <div class="lay"><div class="name"><button class="tw" aria-label="Collapse"></button><input type="checkbox" id="l8"><label for="l8">LE70090532003066EDC00_B8.TIF</label></div><div class="val">Value</div><div class="leg"><i class="ramp"></i><div class="hl"><span>High : 255</span><span>Low : 0</span></div></div></div>
            <div class="dir"><button class="tw" aria-label="Collapse"></button><svg><use href="#folder"/></svg><span>C:\Users\Edier\AppData\Local\ESRI\Desktop10</span></div>
            <div class="file"><svg><use href="#tbl"/></svg><span>dendrog_composi1.txt</span></div>
          </div>
          <div class="sb v toc-v"><i class="arr up"></i><i class="gap"></i><i class="thumb"></i><i class="gap2"></i><i class="arr down"></i></div>
          <div class="sb h toc-h"><i class="arr left"></i><i class="thumb"></i><i class="gap2"></i><i class="arr right"></i></div>
          <i class="corner"></i>
        </div>
      </section>

      <section class="view">
        <div class="canvas">
          <svg class="scene" viewBox="0 0 1520 1509" preserveAspectRatio="none" role="img" aria-label="Satellite scene" color-interpolation-filters="sRGB">
            <defs>
              <clipPath id="quad"><path d="M265 7L1486 202 1238 1502 10 1305z"/></clipPath>
              <linearGradient id="sea" x1="0" y1="0" x2="0" y2="1"><stop offset="0" stop-color="#8b5f4e"/><stop offset=".16" stop-color="#8d6854"/><stop offset=".27" stop-color="#83564a"/><stop offset=".38" stop-color="#84604b"/><stop offset=".5" stop-color="#815546"/><stop offset=".78" stop-color="#805747"/><stop offset=".88" stop-color="#7a4f40"/><stop offset="1" stop-color="#865f48"/></linearGradient>
              <filter id="soft" x="-30%" y="-30%" width="160%" height="160%"><feGaussianBlur stdDeviation="34"/></filter>
              <filter id="soft2" x="-30%" y="-30%" width="160%" height="160%"><feGaussianBlur stdDeviation="9"/></filter>
              <filter id="rough" x="-5%" y="-5%" width="110%" height="110%"><feTurbulence type="fractalNoise" baseFrequency=".06" numOctaves="4" seed="4"/><feDisplacementMap in="SourceGraphic" scale="34"/></filter>
              <filter id="shred" x="-15%" y="-15%" width="130%" height="130%"><feTurbulence type="fractalNoise" baseFrequency=".11" numOctaves="4" seed="9"/><feDisplacementMap in="SourceGraphic" scale="75"/><feGaussianBlur stdDeviation="1.500"/></filter>
              <filter id="grain" x="0" y="0" width="100%" height="100%"><feTurbulence type="fractalNoise" baseFrequency=".3" numOctaves="3" seed="8"/><feColorMatrix values="0 0 0 0 .56  0 0 0 0 .47  0 0 0 0 .58  3 0 0 0 -1.400"/></filter>
              <filter id="blot" x="0" y="0" width="100%" height="100%"><feTurbulence type="fractalNoise" baseFrequency=".014 .009" numOctaves="6" seed="21"/><feColorMatrix values="0 0 0 0 .45  0 0 0 0 .33  0 0 0 0 .27  4 0 0 0 -1.900"/></filter>
            </defs>
            <path d="M0 0h1520v1509H0z" fill="#000"/>
            <g clip-path="url(#quad)">
              <path d="M0 0h1520v1509H0z" fill="#7b626a"/>
              <g filter="url(#soft)">
                <ellipse cx="700" cy="180" rx="150" ry="90" fill="#826670"/>
                <ellipse cx="1000" cy="230" rx="180" ry="110" fill="#775a48"/>
                <ellipse cx="1060" cy="330" rx="170" ry="60" fill="#745548"/>
                <path d="M1290 120h230l-90 450-110-90z" fill="#45322b"/>
                <ellipse cx="1170" cy="350" rx="70" ry="90" fill="#73564e"/>
                <path d="M1260 450l120 80-70 170-90-160z" fill="#7a5850"/>
                <path d="M380 830l120 10-30 200-90 260-60-60z" fill="#745a48"/>
                <ellipse cx="560" cy="1080" rx="130" ry="190" fill="#75584f"/>
                <ellipse cx="1000" cy="1150" rx="240" ry="130" fill="#75636f"/>
                <ellipse cx="900" cy="880" rx="230" ry="120" fill="#786473"/>
                <ellipse cx="1250" cy="640" rx="80" ry="70" fill="#7f6b7b"/>
                <ellipse cx="420" cy="450" rx="140" ry="120" fill="#785e66"/>
                <ellipse cx="1060" cy="660" rx="110" ry="60" fill="#715559"/>
                <ellipse cx="780" cy="560" rx="60" ry="230" fill="#7b6067"/>
                <ellipse cx="1080" cy="1350" rx="170" ry="70" fill="#6b5154"/>
                <ellipse cx="600" cy="1330" rx="300" ry="60" fill="#7f6877"/>
              </g>
              <path d="M0 0h1520v1509H0z" filter="url(#blot)" opacity=".4"/>
              <path d="M985 110l260 60-40 80-50 10-80 60-60-20-40-70z" fill="#7a5c4a" opacity=".6" filter="url(#soft)"/>
              <path d="M0 0h1520v1509H0z" filter="url(#grain)" opacity=".2"/>
              <g filter="url(#shred)">
                <path d="M885 115l85 5-10 50-20 70 40 10-10 40-30 20-35-40-10-80zM735 85l55 5v70l-30-5z" fill="#93808a" opacity=".55"/>
                <path d="M915 165h55v100l-70 10z" fill="#775944" opacity=".8"/>
                <path d="M740 610l25 15-25 40-30 10-20 35 10-60zM800 715l20 5-10 70-25 15z" fill="#735141" opacity=".8"/>
                <path d="M760 800l30 10-20 20 20 40-40 60 20 60-20 20-10-90zM720 930l15 60 50 130-10 60 25 130-30-50-20-170-30-120z" fill="#715547" opacity=".6"/>
                <path d="M1290 660l40-20 10 170-20 90-40-90-10-60zM1130 340l60-100 30 60-20 130-30 10z" fill="#6f5044" opacity=".6"/>
                <path d="M230 525l50 10 20 40-40 40-40-40z" fill="#947a80" opacity=".7"/>
              </g>
              <g filter="url(#rough)">
                <path d="M550 370c40 20 60 50 50 90l-30 60-25-10 10-60 10-30zM540 560l20 30-20 35-40 10-60 110-25 60-20 60-25 15-10-30 20-50 60-100 40-60z" fill="#7a5d4e" opacity=".7"/>
                <path d="M805 1065l30 5 10 35-20 10-25-30z" fill="#8b7478"/>
              </g>
              <path filter="url(#rough)" fill="url(#sea)" d="M265-20L650 60l10 18-62 27-8 45-55 30-65 40-35 12-10 68-45 15-45 15-35 45-38 35 13 60-5 40-35 15-5 60 30 30-15 55 10 40 30 50 80 15-5 50-90-5-40 60-10 40-22 25-20 40-20 60-10 30 55 25 27 45-2 40-40 110-8 40-220 0-20-60z"/>
              <path d="M205 570l-10 70 15 50-80 70 85-55 15-60z" fill="#8a7078" filter="url(#rough)"/>
              <g filter="url(#soft2)" stroke="#8a6f60" stroke-width="12" opacity=".3"><path d="M1300 420l170-70M1290 350l190-80M1270 290l200-90M1330 480l130-50"/></g>
              <path d="M1486 202L1238 1502" stroke="#080868" stroke-width="16"/>
              <path d="M1474 202L1226 1502" stroke="#0a5058" stroke-width="9"/>
              <path d="M262 7L7 1305" stroke="#000" stroke-width="22" stroke-dasharray="3 3"/>
              <path d="M268 7L13 1305" stroke="#a01c04" stroke-width="9" stroke-dasharray="6 4"/>
              <path d="M277 7L22 1305" stroke="#000" stroke-width="10" stroke-dasharray="3 7"/>
              <path d="M276 7L21 1305" stroke="#a07420" stroke-width="4" stroke-dasharray="4 6"/>
              <path id="clouds" fill="#f4eef4"/>
              <path id="clouds2" fill="#b09cab"/>
            </g>
          </svg>
        </div>
        <div class="sb v view-v"><i class="arr up"></i><i class="thumb"></i><i class="arr down"></i></div>
        <div class="view-foot">
          <button class="vb on" aria-label="Data View"><svg><use href="#dview"/></svg></button>
          <button class="vb" aria-label="Layout View"><svg><use href="#lview"/></svg></button>
          <i class="sep"></i>
          <button class="vb" aria-label="Refresh"><svg><use href="#refr"/></svg></button>
          <button class="vb" aria-label="Pause Drawing"><svg><use href="#pause"/></svg></button>
          <div class="sb h view-h"><i class="arr left"></i><i class="thumb"></i><i class="arr right"></i></div>
        </div>
        <i class="corner"></i>
      </section>

      <nav class="tabs">
        <button><svg><use href="#catalog"/></svg><span>Catalog</span></button>
        <button><svg><use href="#search"/></svg><span>Search</span></button>
      </nav>

      <section class="win arc">
        <div class="title"><h2>ArcToolbox</h2><button aria-label="Maximize"><svg><use href="#max"/></svg></button><button aria-label="Close"><svg><use href="#x"/></svg></button></div>
        <div class="arc-box">
          <div class="arc-list">
            <div class="arc-row"><button class="tw plus" aria-label="Expand"></button><svg><use href="#toolbox"/></svg><span>Geostatistical Analyst Tools</span></div>
          </div>
          <div class="sb v arc-v"><i class="arr up"></i><i class="gap"></i><i class="thumb"></i><i class="gap2"></i><i class="arr down"></i></div>
        </div>
      </section>

      <section class="win ia">
        <div class="title"><h2>Image Analysis</h2><button aria-label="Maximize"><svg><use href="#max"/></svg></button><button aria-label="Close"><svg><use href="#x"/></svg></button></div>
        <div class="ia-tools"><button class="tb" aria-label="Options"><svg><use href="#opts"/></svg></button></div>
        <div class="ia-box">
          <ul>
            <li class="cur"><input type="checkbox" id="a0" checked><svg><use href="#rasb"/></svg><label for="a0">Composite_LE70090532003066EDC00_B1.TIF</label></li>
            <li><input type="checkbox" id="a1"><svg><use href="#ras"/></svg><label for="a1">prueba</label></li>
            <li><input type="checkbox" id="a2"><svg><use href="#ras"/></svg><label for="a2">LE70090532003066EDC00_B1.TIF</label></li>
            <li><input type="checkbox" id="a3"><svg><use href="#ras"/></svg><label for="a3">LE70090532003066EDC00_B2.TIF</label></li>
            <li><input type="checkbox" id="a4"><svg><use href="#ras"/></svg><label for="a4">LE70090532003066EDC00_B3.TIF</label></li>
            <li><input type="checkbox" id="a5"><svg><use href="#ras"/></svg><label for="a5">LE70090532003066EDC00_B4.TIF</label></li>
            <li><input type="checkbox" id="a6"><svg><use href="#ras"/></svg><label for="a6">LE70090532003066EDC00_B5.TIF</label></li>
            <li><input type="checkbox" id="a7"><svg><use href="#ras"/></svg><label for="a7">LE70090532003066EDC00_B6_VCID_1.TIF</label></li>
            <li><input type="checkbox" id="a8"><svg><use href="#ras"/></svg><label for="a8">LE70090532003066EDC00_B6_VCID_2.TIF</label></li>
            <li><input type="checkbox" id="a9"><svg><use href="#ras"/></svg><label for="a9">LE70090532003066EDC00_B7.TIF</label></li>
            <li><input type="checkbox" id="a10"><svg><use href="#ras"/></svg><label for="a10">LE70090532003066EDC00_B8.TIF</label></li>
          </ul>
          <div class="sb h ia-h"><i class="arr left"></i><i class="thumb"></i><i class="arr right"></i></div>
        </div>
        <div class="split"><i></i><div><button aria-label="Collapse all"><svg><use href="#chk"/></svg></button><button aria-label="Split"><svg><use href="#bar"/></svg></button></div></div>
        <div class="head"><h3>Display</h3><button class="tw" aria-label="Collapse"></button></div>
        <div class="sec display">
          <div class="slide"><span class="ib"><svg><use href="#contrast"/></svg></span><input type="range" aria-label="Contrast" value="50"><input type="text" aria-label="Contrast value" value="0"></div>
          <div class="slide"><span class="ib"><svg><use href="#sun"/></svg></span><input type="range" aria-label="Brightness" value="50"><input type="text" aria-label="Brightness value" value="0"></div>
          <div class="slide"><span class="ib"><svg><use href="#transp"/></svg></span><input type="range" aria-label="Transparency" value="0"><input type="text" aria-label="Transparency value" value="0"></div>
          <div class="slide"><span class="ib"><svg><use href="#gamma"/></svg></span><input type="range" aria-label="Gamma" value="50"><input type="text" aria-label="Gamma value" value="1,00"></div>
          <div class="checks"><span><input type="checkbox" id="dra"><label for="dra">DRA</label></span><span><input type="checkbox" id="top" disabled><label for="top" class="dis">TopUp</label></span></div>
          <div class="checks"><span><input type="checkbox" id="bg"><label for="bg">Background</label></span></div>
          <div class="pair"><span class="pick btnish"><select aria-label="Stretch"><option>Percent Clip</option></select></span><button class="ib" aria-label="Histogram"><svg><use href="#hist"/></svg></button></div>
          <div class="pair"><span class="pick btnish"><select aria-label="Resampling"><option>Nearest Neighbor</option></select></span></div>
          <div class="trio"><button class="ib" aria-label="Zoom to Raster Resolution"><svg><use href="#zras"/></svg></button><button class="ib" aria-label="Swipe Layer"><svg><use href="#swipe"/></svg></button><button class="ib" aria-label="Flicker Layer"><svg><use href="#flick"/></svg></button><input type="text" aria-label="Flicker rate" value="500"><span class="spin"><button aria-label="Increase"></button><button aria-label="Decrease"></button></span></div>
        </div>
        <div class="head"><h3>Processing</h3><button class="tw" aria-label="Collapse"></button></div>
        <div class="sec proc">
          <div class="icons"><button class="ib" aria-label="Clip"><svg><use href="#clip"/></svg></button><button class="ib" aria-label="Mask"><svg><use href="#mask"/></svg></button><button class="ib" aria-label="Composite Bands"><svg><use href="#stack"/></svg></button><button class="ib" aria-label="NDVI"><svg><use href="#leaf"/></svg></button><button class="ib" aria-label="Difference"><svg><use href="#mosaic"/></svg></button><button class="ib" aria-label="Orthorectify"><svg><use href="#ortho"/></svg></button><button class="ib" aria-label="Orthorectify with DEM"><svg><use href="#ortho"/></svg></button><button class="ib" aria-label="Orthorectify edit"><svg><use href="#ortho"/></svg></button><button class="ib" aria-label="Export"><svg><use href="#save"/></svg></button></div>
          <div class="icons"><button class="ib" aria-label="Edit Function"><svg><use href="#fxe"/></svg></button><button class="ib" aria-label="Add Function"><svg><use href="#fxp"/></svg></button></div>
          <div class="pair"><span class="pick btnish ramps"><select aria-label="Color ramp" disabled><option></option></select></span><button class="ib" aria-label="Shaded Relief"><svg><use href="#shade"/></svg></button></div>
          <div class="pair"><span class="pick btnish gray"><select aria-label="Mosaic method" disabled><option>Blend</option></select></span><button class="ib" aria-label="Mosaic"><svg><use href="#pansh"/></svg></button></div>
          <div class="pair"><span class="pick btnish"><select aria-label="Filter type"><option>Sharpen</option></select></span><button class="ib" aria-label="Filter"><svg><use href="#filter"/></svg></button></div>
        </div>
        <div class="head"><h3>Mensuration</h3><button class="tw" aria-label="Collapse"></button></div>
        <div class="sec mens">
          <div class="icons"><button class="ib" aria-label="Distance"><svg><use href="#rul"/></svg></button><button class="ib" aria-label="Point"><svg><use href="#rulp"/></svg></button><button class="ib" aria-label="Centroid"><svg><use href="#rulc"/></svg></button><button class="ib" aria-label="Area"><svg><use href="#rula"/></svg></button><button class="ib" aria-label="Height, base to top"><svg><use href="#bld1"/></svg></button><button class="ib" aria-label="Height, top to shadow"><svg><use href="#bld2"/></svg></button><button class="ib" aria-label="Height, base to shadow"><svg><use href="#bld3"/></svg></button><button class="ib" aria-label="Options"><svg><use href="#meas3"/></svg></button><button class="ib" aria-label="Results"><svg><use href="#rulw"/></svg></button></div>
          <div class="m3"><input type="checkbox" id="m3d" disabled><label for="m3d" class="dis">Measure in 3D</label></div>
        </div>
      </section>

      <div class="tip" role="tooltip">
        <h4>Training Sample Manager</h4>
        <p>Open the Training Sample<br>Manager window so you can view<br>and change properties for training<br>samples.</p>
        <div class="tip-help"><svg><use href="#help"/></svg><b>Press F1 for more help.</b></div>
      </div>
    </main>

    <footer class="status"><i></i><i></i><span>496314,979&nbsp; 1260007,871 Meters</span></footer>
  </div>
</div>
<script src="clouds.js"></script>
</body>
</html>
```
FILE: styles.css
```css
* { box-sizing: border-box; }
html, body { margin: 0; height: 100%; }
body {
  font: 11px/15px "Open Sans", "Noto Sans", sans-serif;
  color: #000;
  background: #f0f0f0;
  overflow: hidden;
}
button, input, select { font: inherit; color: inherit; margin: 0; padding: 0; border: 0; border-radius: 0; background: none; }
h2, h3, h4, p, ul { margin: 0; padding: 0; font-size: inherit; font-weight: normal; list-style: none; }
a { color: inherit; text-decoration: none; }
svg { display: block; width: 16px; height: 16px; flex: none; }
i { font-style: normal; display: block; flex: none; }
.sprite { position: absolute; width: 0; height: 0; }

.page { display: flex; height: 100vh; }
.behind { width: 18px; display: flex; flex-direction: column; background: #fff; }
.behind-photo { height: 20px; border-bottom: 1px solid #ccc; background: linear-gradient(90deg, #777 0, #999 7px, #e8e8e8 8px, #f4f4f4); }
.behind-nav { height: 93px; border-bottom: 1px solid #ccc; display: flex; align-items: flex-end; padding-bottom: 4px; }
.behind-nav svg { width: 9px; height: 7px; }
.behind-rest { flex: 1; background: linear-gradient(#fdfdfd, #f0f0f0); }
.app { flex: 1; min-width: 0; display: flex; flex-direction: column; background: linear-gradient(90deg, #f0f0f0, #f3f3f3 50%, #fafafa); }

/* menu and toolbars */
.top { display: flex; flex-direction: column; gap: 2px; padding-bottom: 1px; }
.menu { display: flex; gap: 17px; height: 16px; padding-left: 12px; line-height: 10px; white-space: nowrap; }
.row { display: flex; gap: 3px; height: 24px; padding-left: 3px; }
.bar { display: flex; align-items: center; height: 24px; background: linear-gradient(#fbfbfb, #f7f7f7 50%, #ececec); border-radius: 3px; }
.grip { width: 3px; height: 16px; margin: 0 2px; background: repeating-linear-gradient(#b4b4b4 0 2px, transparent 2px 4px); }
.sep { width: 1px; height: 14px; margin: 0 3px 0 2px; background: #b8b8b8; }
.tb { width: 22px; height: 22px; display: flex; align-items: center; justify-content: center; color: #111; flex: none; }
.tb.off { color: #b0b0b0; }
.tb.navy { color: #205a94; }
.tb.blue { color: #1c58b8; }
.tb.on { border: 1px solid #3c9aff; background: #dcebfa; }
.tb.dim { border-color: #aab8c8; background: #e6ecf3; }
.tb.flip svg { rotate: y 180deg; }
.drop { width: 12px; height: 22px; display: flex; align-items: center; justify-content: center; }
.drop.thin { width: 10px; }
.drop::before, .pick::after { content: ""; border: 4px solid transparent; border-top-color: #000; border-bottom: 0; }
.drop::before { border-width: 3px; border-bottom: 0; }
.drop.off::before { border-top-color: #999; }
.more { align-self: stretch; width: 11px; margin-left: 1px; background: linear-gradient(#e8e8e8, #a8a8a8); border-radius: 0 3px 3px 0; display: flex; flex-direction: column; align-items: center; justify-content: flex-end; gap: 1px; padding-bottom: 2px; }
.more::before { content: ""; width: 5px; height: 1px; background: #000; }
.more::after { content: ""; border: 3px solid transparent; border-top-color: #000; border-bottom: 0; }
.label-btn { padding-left: 4px; }

.pick { display: flex; align-items: center; position: relative; }
.pick::after { position: absolute; right: 5px; pointer-events: none; }
.pick select { appearance: none; flex: 1; min-width: 0; height: 100%; }
.scale { width: 147px; height: 20px; background: #fff; border: 1px solid #d0d8e4; }
.scale select { padding-left: 2px; }
.layer { width: 178px; height: 19px; margin-right: 2px; background: #fff; border: 1px solid #7a7a7a; box-shadow: inset 0 0 0 1px #d8d8d8; }
.layer select { flex: none; width: 144px; height: 15px; line-height: 13px; margin-left: 1px; padding-left: 4px; background: #3399ff; color: #fff; border: 1px dotted #e08020; }
.zoom { width: 60px; height: 21px; background: #f4f4f4; border: 1px solid #b4b4b4; }
.zoom select { color: #777; opacity: 1; padding-left: 2px; background: linear-gradient(90deg, #3399ff 28px, #f0f0f0 28px) 1px 2px / 38px 14px no-repeat; }
.zoom::after { border-top-color: #999; }

.work { flex: 1; min-height: 0; position: relative; display: flex; }
.title { display: flex; align-items: center; gap: 6px; height: 20px; padding: 0 4px; background: linear-gradient(90deg, #bccad9, #d6e4f2); color: #46525c; }
.title h2 { flex: 1; }
.title svg { width: 10px; height: 10px; }

/* scrollbars */
.sb { display: flex; background: #f0f0f0; }
.sb.v { flex-direction: column; width: 16px; }
.sb.h { height: 16px; }
.arr { width: 16px; height: 16px; display: flex; align-items: center; justify-content: center; }
.arr::before { content: ""; border: 3px solid transparent; }
.up::before { border-top: 0; border-bottom-color: #444; }
.down::before { border-bottom: 0; border-top-color: #444; }
.left::before { border-left: 0; border-right-color: #444; }
.right::before { border-right: 0; border-left-color: #444; }
.thumb { flex: 1 1 0; border: 1px solid #979797; border-radius: 2px; display: flex; align-items: center; justify-content: center; }
.v > .thumb { background: linear-gradient(90deg, #f4f4f4, #dcdcdc 50%, #bfbfc3); }
.h > .thumb { background: linear-gradient(#f4f4f4, #dcdcdc 50%, #bfbfc3); }
.thumb::before { content: ""; width: 8px; height: 8px; }
.v > .thumb::before { background: repeating-linear-gradient(#666 0 1px, #fff 1px 2px, transparent 2px 3px); }
.h > .thumb::before { background: repeating-linear-gradient(90deg, #666 0 1px, #fff 1px 2px, transparent 2px 3px); }

/* table of contents */
.toc { width: 328px; display: flex; flex-direction: column; flex: none; }
.toc-tools { height: 26px; margin-left: 3px; }
.toc-tools .sep { margin: 0 2px; }
.toc-box { flex: 1; min-height: 0; margin-right: 1px; display: grid; grid-template: minmax(0, 1fr) 16px / minmax(0, 1fr) 16px; border: 1px solid #828790; background: #fff; padding: 0 1px 1px; }
.toc-list { overflow: hidden; white-space: nowrap; }
.lay { padding: 0 0 22px 45px; }
.name, .dir, .file { display: flex; align-items: center; height: 18px; }
.name label { margin-left: 8px; }
.name input { appearance: none; width: 11px; height: 11px; border: 1px solid #000; margin-left: 8px; background: #fff; }
.tw { width: 9px; height: 9px; border: 1px solid #8c9db0; border-radius: 1px; background: linear-gradient(#4068a8, #4068a8) 1px 3px / 5px 1px no-repeat, linear-gradient(135deg, #fff, #dde3ea); flex: none; }
.tw.plus { background: linear-gradient(#4068a8, #4068a8) 1px 3px / 5px 1px no-repeat, linear-gradient(#4068a8, #4068a8) 3px 1px / 1px 5px no-repeat, #fff; }
.val { height: 17px; line-height: 17px; padding-left: 55px; }
.leg { display: flex; height: 51px; padding-left: 32px; }
.ramp { width: 13px; height: 36px; margin: 1px 5px 0 0; background: linear-gradient(#f4f4f4, #000); }
.hl { display: flex; flex-direction: column; justify-content: space-between; padding-bottom: 1px; }
.tail .leg { height: 15px; padding-left: 50px; }
.tail .hl { justify-content: flex-end; }
.dir { padding-left: 26px; }
.dir svg { margin: 0 4px 0 7px; }
.file { padding-left: 59px; }
.file svg { margin-right: 6px; }
.toc-v .gap { flex: 270 1 0; }
.toc-v .thumb { flex: 500 1 0; }
.toc-v .gap2 { flex: 24 1 0; }
.toc-h .thumb { flex: 166 1 0; }
.toc-h .gap2 { flex: 107 1 0; }
.corner { background: #f0f0f0; }

/* map view */
.view { flex: 1; min-width: 0; margin-left: 5px; display: grid; grid-template: minmax(0, 1fr) 17px / minmax(0, 1fr) 17px; border-top: 2px solid #6c6c6c; border-left: 2px solid #6c6c6c; background: #f0f0f0; }
.canvas { position: relative; background: #fdfeff; border-right: 2px solid #e8e8e8; overflow: hidden; }
.scene { position: absolute; left: 244px; top: 105px; width: 708px; height: 636px; }
.view-v { margin-left: 1px; }
.view-foot { display: flex; align-items: center; border-top: 1px solid #ddd; }
.view-foot .sep { margin: 0 4px 0 3px; }
.vb { width: 16px; height: 16px; display: flex; align-items: center; justify-content: center; }
.vb svg { width: 9px; height: 9px; }
.vb.on { border: 1px solid #555; border-radius: 2px; background: #d8d8d8; }
.view-h { flex: 1; }

.tabs { width: 14px; padding: 3px 0 0 4px; overflow: hidden; display: flex; flex-direction: column; }
.tabs button { height: 70px; width: 22px; border: 1px solid #999; border-radius: 4px; background: #f6f6f6; display: flex; flex-direction: column; align-items: center; gap: 3px; padding-top: 4px; color: #555; }
.tabs span { writing-mode: vertical-rl; }

/* floating windows */
.win { position: absolute; border: 1px solid #e4e4e4; border-right: 2px solid #000; border-bottom: 2px solid #000; background: #f0f0f0; display: flex; flex-direction: column; padding: 2px 1px 2px 2px; }
.win > .title { height: 19px; gap: 7px; flex: none; }
.arc { right: 67px; top: -13px; width: 299px; height: 600px; }
.arc-box { flex: 1; margin-top: 2px; display: flex; border: 1px solid #828790; padding: 0 1px 20px; background: #f0f0f0; }
.arc-list { flex: 1; background: #fff; }
.arc-row { display: flex; align-items: center; height: 20px; padding-left: 7px; }
.arc-row svg { margin: 0 4px 0 6px; }
.arc-v .gap { flex: 95 1 0; }
.arc-v .thumb { flex: 308 1 0; }
.arc-v .gap2 { flex: 114 1 0; }

.ia { right: 93px; top: 33px; width: 450px; padding-bottom: 1px; }
.ia-tools { height: 25px; display: flex; align-items: center; border-bottom: 1px solid #a0a0a0; }
.ia-tools svg { width: 14px; height: 14px; }
.ia-box { border: 1px solid #828790; background: #fff; padding: 1px; margin-top: 1px; }
.ia-box ul { height: 212px; }
.ia-box li { display: flex; align-items: center; height: 17px; padding-left: 4px; }
.ia-box li label { flex: 1; padding-left: 1px; line-height: 17px; }
.ia-box li svg { margin-left: 3px; }
.ia-box li.cur label { background: #f0f0f0; }
.ia input[type=checkbox] { appearance: none; width: 13px; height: 13px; border: 1px solid #8e8f8f; background: linear-gradient(135deg, #cfd3d8, #fafafa) 2px 2px / 7px 7px no-repeat, #f6f6f6; flex: none; }
.ia input[type=checkbox]:disabled { border-color: #b8b8b8; background: #f8f8f8; }
.ia input[type=checkbox]:checked::before { content: "✓"; display: block; font: bold 12px/11px "DejaVu Sans", sans-serif; color: #31479c; }
.split { height: 15px; display: flex; justify-content: center; align-items: center; position: relative; }
.split > i { width: 148px; height: 1px; background: #a0a0a0; }
.split div { position: absolute; right: 1px; top: 2px; display: flex; gap: 1px; }
.split svg { width: 11px; height: 11px; }
.head { display: flex; justify-content: space-between; align-items: center; height: 20px; border-top: 1px solid #a0a0a0; border-left: 1px solid #a0a0a0; padding: 0 6px 0 5px; }
.head h3 { font-weight: bold; }
.head .tw { border-color: #6d8fb5; background: linear-gradient(#111, #111) 1px 3px / 5px 1px no-repeat, #f4f8fc; }
.sec { background: #fff; display: flex; flex-direction: column; border-left: 1px solid #f0f0f0; }
.ib { width: 21px; height: 22px; border: 1px solid #f0f0f0; display: flex; align-items: center; justify-content: center; flex: none; }
.display { height: 231px; padding: 6px 0 0 7px; }
.slide { display: flex; align-items: center; height: 24px; }
.slide input[type=range] { appearance: none; width: 118px; height: 16px; margin: 0 8px 0 6px; background: linear-gradient(#b0b0b0 1px, #e7eaea 1px) 0 6px / 100% 4px no-repeat; }
.slide input[type=range]::-webkit-slider-thumb { appearance: none; width: 6px; height: 14px; border: 1px solid #555; border-radius: 2px; background: #f4f4f4; }
.slide input[type=text] { width: 33px; height: 20px; border: 1px solid #dde1ea; border-top-color: #abadb3; border-radius: 2px; text-align: right; padding-right: 5px; }
.checks { display: flex; height: 20px; align-items: center; padding-left: 4px; }
.checks span { display: flex; align-items: center; gap: 2px; width: 92px; }
.slide + .checks { margin-top: 4px; }
.dis { color: #6d6d6d; }
.pair { display: flex; align-items: center; gap: 6px; height: 25px; }
.display .pair { padding-left: 4px; }
.checks + .pair { margin-top: 4px; }
.btnish { width: 155px; height: 21px; border: 1px solid #707070; border-radius: 2px; background: linear-gradient(#f2f2f2, #ebebeb 50%, #dddddd 50%, #cfcfcf); }
.btnish select { padding-left: 2px; }
.trio { display: flex; align-items: center; margin-top: 4px; }
.trio .ib + .ib { margin-left: 27px; }
.trio .ib + .ib + .ib { margin-left: 24px; }
.trio input { width: 35px; height: 20px; border: 1px solid #dde1ea; border-top-color: #abadb3; padding-left: 5px; }
.spin { display: flex; flex-direction: column; gap: 1px; margin-left: 1px; }
.spin button { width: 15px; height: 9px; border: 1px solid #a0a0a8; background: #ececf0; display: flex; align-items: center; justify-content: center; }
.spin button::before { content: ""; border: 3px solid transparent; border-top: 0; border-bottom-color: #4058a0; }
.spin button + button::before { rotate: 180deg; }
.proc { height: 137px; padding: 6px 0 0 4px; }
.icons { display: flex; height: 24px; align-items: center; }
.proc .pair { padding-left: 3px; gap: 4px; }
.proc .btnish { width: 161px; height: 20px; }
.proc .ramps { background: #fff; border-color: #adadad; }
.ramps select { opacity: 1; background: linear-gradient(90deg, #a9eed0, #b0f5b8 8%, #f8f8a8 14%, #38b030 22%, #0a8040 27%, #f8b810 43%, #800000 58%, #64380f 73%, #aaa 86%, #f4f4f8) 4px 4px / 134px 11px no-repeat; }
.proc .gray { background: #f4f4f4; border-color: #adadad; color: #838383; }
.gray select { opacity: 1; }
.ramps::after, .gray::after { border-top-color: #999; }
.mens { height: 54px; padding: 9px 0 0 4px; }
.m3 { display: flex; align-items: center; gap: 3px; height: 20px; padding-left: 3px; }

/* tooltip */
.tip { position: absolute; left: 822px; top: -22px; width: 206px; height: 130px; padding: 6px 3px 0; border: 1px solid #767676; background: linear-gradient(#fff, #e4ecf7 50%, #c9d8ee); box-shadow: 2px 2px 2px #0006; color: #4c4c4c; white-space: nowrap; }
.tip h4 { font-weight: bold; padding-left: 1px; }
.tip p { padding: 9px 0 0 9px; }
.tip-help { display: flex; align-items: center; gap: 8px; margin-top: 7px; padding: 8px 0 0 2px; border-top: 1px solid #9db8dc; box-shadow: inset 0 1px #fff; }
.tip-help svg { width: 14px; height: 14px; }

.status { height: 20px; display: flex; justify-content: flex-end; align-items: center; gap: 3px; padding: 4px 78px 0 0; background: #f0f0f0; }
.status i { width: 126px; height: 14px; border: 1px solid #f5f5f5; }
.status i + i { width: 18px; }
```
FILE: clouds.js
```js
// Scatters cloud specks over the scene with a fixed seed.
(function () {
  var seed = 7;
  function rnd() { seed = (seed * 16807) % 2147483647; return seed / 2147483647; }
  function edge(x) { return 1305 + (x - 10) * 0.16; }
  var bright = "", faint = "";
  function dot(x, y, s) {
    var d = "M" + x.toFixed(0) + " " + y.toFixed(0) + "h" + s + "v" + (s + 1) + "h-" + s + "z";
    if (rnd() < 0.5) bright += d; else faint += d;
  }
  var i, t, x;
  // coast band
  for (i = 0; i < 230; i++) {
    t = rnd();
    x = 175 + 70 * Math.min(1, t * 2.5) + (rnd() + rnd() - 1) * 38 - (t > 0.75 ? (t - 0.75) * 130 : 0);
    dot(x, 985 + t * 350, 3 + Math.floor(rnd() * 5));
  }
  for (i = 0; i < 60; i++) dot(240 + rnd() * 190, 1060 + rnd() * 270, 2 + Math.floor(rnd() * 3));
  for (i = 0; i < 18; i++) dot(105 + rnd() * 60, 1060 + rnd() * 130, 3);
  // southern band
  for (i = 0; i < 480; i++) {
    x = 340 + rnd() * 890;
    dot(x, edge(x) - Math.pow(rnd(), 1.7) * 120, 2 + Math.floor(rnd() * 4));
  }
  for (i = 0; i < 150; i++) {
    t = rnd();
    x = 800 + t * 160 + rnd() * 30;
    dot(x, edge(x) - rnd() * (140 - t * 60), 3 + Math.floor(rnd() * 4));
  }
  // north-east specks
  for (i = 0; i < 14; i++) dot(1375 + rnd() * 90, 195 + rnd() * 30, 3);
  bright += "M1448 205h12v12h-12z";
  document.getElementById("clouds").setAttribute("d", bright);
  document.getElementById("clouds2").setAttribute("d", faint);
})();
```
